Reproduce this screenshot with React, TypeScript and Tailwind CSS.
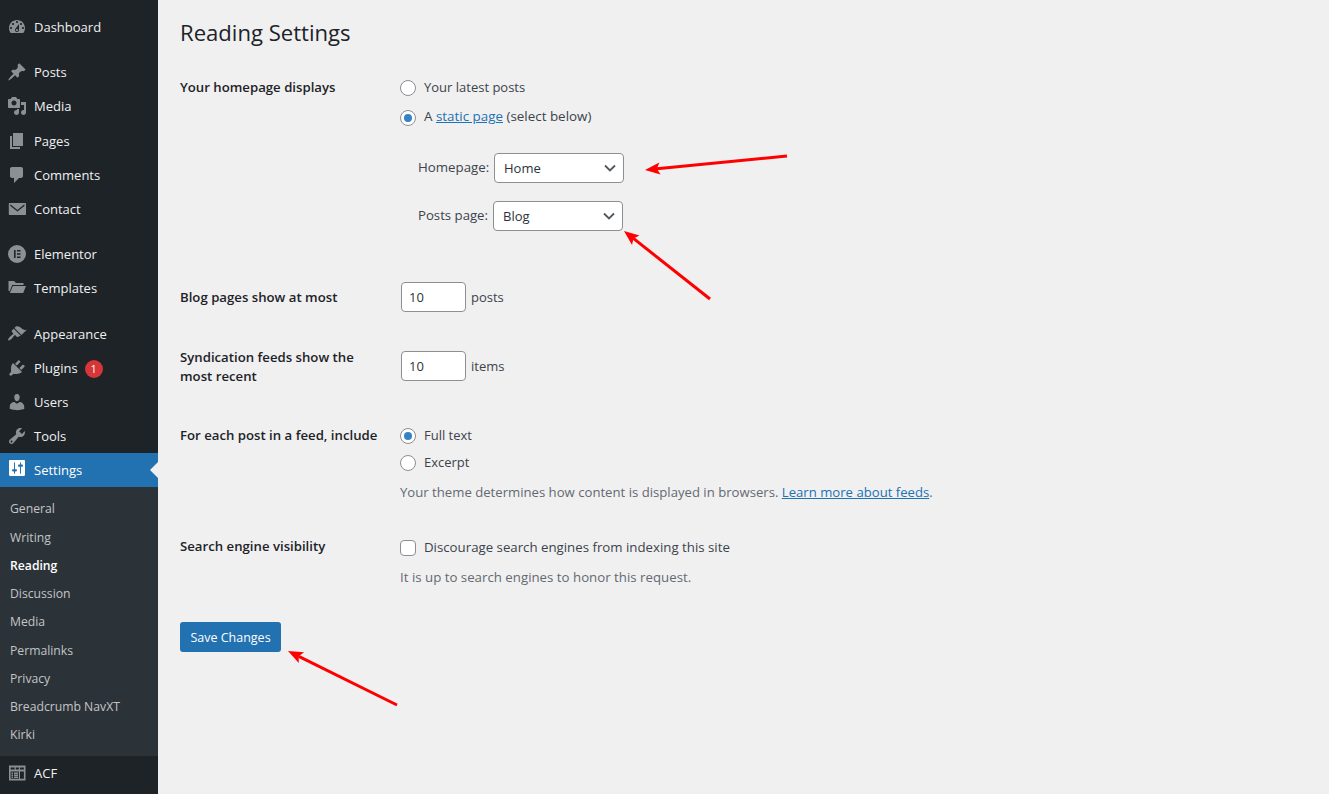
import React from "react";

const P: Record<string, string> = {
  dashboard: "M3.76 16h12.48c1.1-1.37 1.76-3.11 1.76-5 0-4.42-3.58-8-8-8s-8 3.58-8 8c0 1.89.66 3.63 1.76 5zM10 4c.55 0 1 .45 1 1s-.45 1-1 1-1-.45-1-1 .45-1 1-1zM6 6c.55 0 1 .45 1 1s-.45 1-1 1-1-.45-1-1 .45-1 1-1zm8 0c.55 0 1 .45 1 1s-.45 1-1 1-1-.45-1-1 .45-1 1-1zm-5.37 5.55L12 7v6c0 1.1-.9 2-2 2s-2-.9-2-2c0-.57.24-1.08.63-1.45zM4 10c.55 0 1 .45 1 1s-.45 1-1 1-1-.45-1-1 .45-1 1-1zm12 0c.55 0 1 .45 1 1s-.45 1-1 1-1-.45-1-1 .45-1 1-1zm-5 3c0-.55-.45-1-1-1s-1 .45-1 1 .45 1 1 1 1-.45 1-1z",
  post: "M10.44 3.02l1.82-1.82 6.36 6.35-1.83 1.82c-1.05-.68-2.48-.57-3.41.36l-.75.75c-.92.93-1.04 2.35-.35 3.41l-1.83 1.82-2.41-2.41-2.8 2.79c-.42.42-3.38 2.71-3.8 2.29s1.86-3.39 2.28-3.81l2.79-2.79L4.1 9.36l1.83-1.82c1.05.69 2.48.57 3.4-.36l.75-.75c.93-.92 1.05-2.35.36-3.41z",
  media: "M13 11V4c0-.55-.45-1-1-1h-1.67L9 1H5L3.67 3H2c-.55 0-1 .45-1 1v7c0 .55.45 1 1 1h10c.55 0 1-.45 1-1zM7 4.5c1.38 0 2.5 1.12 2.5 2.5S8.38 9.5 7 9.5 4.5 8.38 4.5 7 5.62 4.5 7 4.5zM14 6h5v10.5c0 1.38-1.12 2.5-2.5 2.5S14 17.88 14 16.5s1.12-2.5 2.5-2.5c.17 0 .34.02.5.05V9h-3V6zm-4 8.05V13h2v3.5c0 1.38-1.12 2.5-2.5 2.5S7 17.88 7 16.5 8.12 14 9.5 14c.17 0 .34.02.5.05z",
  page: "M6 15V2h10v13H6zm-1 1h8v2H3V5h2v11z",
  comments: "M5 2h9c1.1 0 2 .9 2 2v7c0 1.1-.9 2-2 2h-2l-5 5v-5H5c-1.1 0-2-.9-2-2V4c0-1.1.9-2 2-2z",
  email: "M2.5 4h15.8a.7.7 0 0 1 .7.7v10.6a.7.7 0 0 1-.7.7H2.5a.7.7 0 0 1-.7-.7V4.7a.7.7 0 0 1 .7-.7zM3.4 5.2v1.7L10.4 12.6l7-5.7V5.2l-7 5.7z",
  elementor: "M10 1a9 9 0 1 0 0 18 9 9 0 0 0 0-18zM7 6h1.6v8H7zM10 6h3.5v1.6H10zM10 9.2h3.5v1.6H10zM10 12.4h3.5V14H10z",
  folder: "M1.5 3h5.5l2 2h7.5v2H5.2L2.6 13.6 1.5 12.5zM5.8 8H19l-2.8 7H2.9z",
  appearance: "M14.48 11.06L7.41 3.99l1.5-1.5c.5-.56 2.3-.47 3.51.32 1.21.8 1.43 1.28 2.91 2.1 1.18.64 2.45 1.26 4.45.85zm-.71.71L6.7 4.7 4.93 6.47c-.39.39-.39 1.02 0 1.41l1.06 1.06c.39.39.39 1.03 0 1.42-.6.6-1.43 1.11-2.21 1.69-.35.26-.7.53-1.01.84-.82.82-2.19 2.77-1.51 3.46s2.64-.69 3.46-1.51c.31-.31.58-.66.84-1.01.58-.78 1.09-1.61 1.69-2.21.39-.39 1.03-.39 1.42 0l1.06 1.06c.39.39 1.02.39 1.41 0z",
  plugins: "M13.11 4.36L9.87 7.6 8 5.73l3.24-3.24c.35-.34 1.05-.2 1.56.32.52.51.66 1.21.31 1.55zm-8 1.77l.91-1.12 9.01 9.01-1.19.84c-.71.71-2.63 1.16-3.82 1.16H6.14L4.9 17.26c-.59.59-1.54.59-2.12 0-.59-.58-.59-1.53 0-2.12l1.24-1.24v-3.88c0-1.13.4-3.19 1.09-3.89zm7.26 3.97l3.24-3.24c.34-.35 1.04-.21 1.55.31.52.51.66 1.21.31 1.55l-3.24 3.25z",
  users: "M10 9.25c-2.27 0-2.73-3.44-2.73-3.44C7 4.02 7.82 2 9.97 2c2.16 0 2.98 2.02 2.71 3.81 0 0-.41 3.44-2.68 3.44zm0 2.57L12.72 10c2.39 0 4.52 2.33 4.52 4.53v2.49s-3.65 1.13-7.24 1.13c-3.65 0-7.24-1.13-7.24-1.13v-2.49c0-2.25 1.94-4.48 4.47-4.48z",
  tools: "M16.68 9.77c-1.34 1.34-3.3 1.67-4.95.99l-5.41 6.52c-.99.99-2.59.99-3.58 0s-.99-2.59 0-3.57l6.52-5.42c-.68-1.65-.35-3.61.99-4.95 1.28-1.28 3.12-1.62 4.72-1.06l-2.89 2.89 2.82 2.82 2.86-2.87c.53 1.58.18 3.39-1.08 4.65zM3.81 16.21c.4.39 1.04.39 1.43 0 .4-.4.4-1.04 0-1.43-.39-.4-1.03-.4-1.43 0-.39.39-.39 1.03 0 1.43z",
  settings: "M18 16V4c0-.55-.45-1-1-1H3c-.55 0-1 .45-1 1v12c0 .55.45 1 1 1h14c.55 0 1-.45 1-1zM8 11h1c.55 0 1 .45 1 1s-.45 1-1 1H8v1.5c0 .28-.22.5-.5.5s-.5-.22-.5-.5V13H6c-.55 0-1-.45-1-1s.45-1 1-1h1V5.5c0-.28.22-.5.5-.5s.5.22.5.5V11zm5-2h-1c-.55 0-1-.45-1-1s.45-1 1-1h1V5.5c0-.28.22-.5.5-.5s.5.22.5.5V7h1c.55 0 1 .45 1 1s-.45 1-1 1h-1v5.5c0 .28-.22.5-.5.5s-.5-.22-.5-.5V9z",
  acf: "M2 2.5h16.500v15H2zM3.600 4.500v2h4v-2zM8.800 4.500v2h3v-2zM12.900 4.500v2h4v-2zM3.600 8.500v7.200h8.300V8.500zM4.500 9.500h1.500v1.500H4.500zM7 9.500h4v1.500H7zM4.500 11.500h1.500V13H4.500zM7 11.500h4V13H7zM4.500 13.500h1.500V15H4.500zM7 13.500h4V15H7zM13 8.500v7.200h3.900V8.500z",
};

function Icon({ name, white }: { name: string; white?: boolean }) {
  return (
    <svg viewBox="0 0 20 20" className={white ? "w-5 h-5 fill-white" : "w-5 h-5 fill-[#8c8f94]"}>
      <path d={P[name]} fillRule="evenodd" transform={name === "settings" ? "translate(0 -3.4) scale(1 1.14)" : undefined} />
    </svg>
  );
}

function Item({ icon, label, badge, active, className = "" }: { icon: string; label: string; badge?: string; active?: boolean; className?: string }) {
  return (
    <div className={`relative flex items-center h-[34px] pl-[7px] text-[13px] ${active ? "bg-[#2271b1] text-white" : "text-[#f0f0f1]"} ${className}`}>
      <Icon name={icon} white={active} />
      <span className="ml-[7px] pt-[2px]">{label}</span>
      {badge && (
        <span className="ml-[7px] mt-[2px] w-[18px] h-[18px] rounded-full bg-[#d63638] text-white text-[11px] flex items-center justify-center">{badge}</span>
      )}
      {active && <span className="absolute right-0 top-[9px] w-0 h-0 border-y-[8px] border-y-transparent border-r-[8px] border-r-[#f0f0f1]" />}
    </div>
  );
}

function Sub({ label, current }: { label: string; current?: boolean }) {
  return (
    <div className={`h-[28.25px] flex items-center pl-[10px] text-[12.2px] ${current ? "text-white font-semibold" : "text-[#c3c4c7]"}`}>{label}</div>
  );
}

function Radio({ checked }: { checked?: boolean }) {
  return (
    <span className="w-4 h-4 rounded-full border border-[#8c8f94] bg-white flex items-center justify-center shrink-0">
      {checked && <span className="w-2 h-2 rounded-full bg-[#3582c4]" />}
    </span>
  );
}

function Select({ value }: { value: string }) {
  return (
    <div className="w-[130px] h-[30px] rounded-[4px] border border-[#8c8f94] bg-white flex items-center justify-between pl-[9px] pr-[5px] text-[#2c3338]">
      <span className="pt-px">{value}</span>
      <svg viewBox="0 0 16 16" className="w-4 h-4 stroke-[#50575e] fill-none">
        <path d="M3 5.5 8 10.5 13 5.5" strokeWidth="1.8" />
      </svg>
    </div>
  );
}

function NumberBox() {
  return (
    <div className="w-[65px] h-[30px] rounded-[4px] border border-[#8c8f94] bg-white flex items-center pl-[7px] pt-px text-[#2c3338]">10</div>
  );
}

function Row({ label, children, className = "" }: { label: React.ReactNode; children: React.ReactNode; className?: string }) {
  return (
    <div className={`grid grid-cols-[220px_1fr] ${className}`}>
      <div className="font-semibold text-[13.2px] text-[#1d2327] leading-[19px]">{label}</div>
      <div>{children}</div>
    </div>
  );
}

function Arrow({ x1, y1, x2, y2 }: { x1: number; y1: number; x2: number; y2: number }) {
  const a = Math.atan2(y2 - y1, x2 - x1);
  const len = 15, w = 6;
  const bx = x2 - Math.cos(a) * len, by = y2 - Math.sin(a) * len;
  const nx = -Math.sin(a) * w, ny = Math.cos(a) * w;
  const mx = x2 - Math.cos(a) * (len - 3), my = y2 - Math.sin(a) * (len - 3);
  return (
    <g>
      <line x1={x1} y1={y1} x2={mx} y2={my} stroke="#ff0000" strokeWidth="3" />
      <polygon points={`${x2},${y2} ${bx + nx},${by + ny} ${mx},${my} ${bx - nx},${by - ny}`} fill="#ff0000" />
    </g>
  );
}

export default function App() {
  return (
    <div className="relative flex h-[794px] w-[1329px] overflow-hidden bg-[#f0f0f1] font-['Open_Sans','Noto_Sans',sans-serif] text-[13px] text-[#3c434a]">
      <aside className="w-[158px] shrink-0 bg-[#1d2327] pt-[10px]">
        <Item icon="dashboard" label="Dashboard" />
        <Item icon="post" label="Posts" className="mt-[11px]" />
        <Item icon="media" label="Media" />
        <Item icon="page" label="Pages" className="mt-px" />
        <Item icon="comments" label="Comments" />
        <Item icon="email" label="Contact" />
        <Item icon="elementor" label="Elementor" className="mt-[11px]" />
        <Item icon="folder" label="Templates" />
        <Item icon="appearance" label="Appearance" className="mt-[12px]" />
        <Item icon="plugins" label="Plugins" badge="1" />
        <Item icon="users" label="Users" />
        <Item icon="tools" label="Tools" />
        <Item icon="settings" label="Settings" active />
        <div className="bg-[#2c3338] pt-[8.35px] h-[269px]">
          <Sub label="General" />
          <Sub label="Writing" />
          <Sub label="Reading" current />
          <Sub label="Discussion" />
          <Sub label="Media" />
          <Sub label="Permalinks" />
          <Sub label="Privacy" />
          <Sub label="Breadcrumb NavXT" />
          <Sub label="Kirki" />
        </div>
        <Item icon="acf" label="ACF" />
      </aside>

      <main className="flex-1 pl-[22px] pt-[17px]">
        <h1 className="text-[22.1px] leading-[30px] text-[#1d2327]">Reading Settings</h1>

        <Row label="Your homepage displays" className="mt-[31px]">
          <label className="flex items-center gap-2 h-[19px]"><Radio /><span>Your latest posts</span></label>
          <label className="flex items-center gap-2 h-[19px] mt-[11px]">
            <Radio checked />
            <span className="text-[13.4px] pb-[2px]">A <a className="text-[#2271b1] underline">static page</a> (select below)</span>
          </label>
          <div className="flex items-center mt-[26px] ml-[18px]"><span className="w-[76px] text-[13.3px]">Homepage:</span><Select value="Home" /></div>
          <div className="flex items-center mt-[18px] ml-[18px]"><span className="w-[75px] text-[13.2px]">Posts page:</span><Select value="Blog" /></div>
        </Row>

        <Row label="Blog pages show at most" className="mt-[51px] items-center">
          <div className="flex items-center gap-[5px] ml-px"><NumberBox /><span className="pt-px">posts</span></div>
        </Row>

        <Row label={<>Syndication feeds show the<br />most recent</>} className="mt-[36px]">
          <div className="flex items-center gap-[5px] ml-px mt-[3px]"><NumberBox /><span className="pt-px">items</span></div>
        </Row>

        <Row label="For each post in a feed, include" className="mt-[40px]">
          <label className="flex items-center gap-2 h-[19px]"><Radio checked /><span>Full text</span></label>
          <label className="flex items-center gap-2 h-[19px] mt-2"><Radio /><span>Excerpt</span></label>
          <p className="mt-[11px] leading-[19px] text-[13.15px] text-[#646970]">
            Your theme determines how content is displayed in browsers. <a className="text-[#2271b1] underline">Learn more about feeds</a>.
          </p>
        </Row>

        <Row label="Search engine visibility" className="mt-[35px]">
          <label className="flex items-center gap-2 h-[19px] mt-px">
            <span className="w-4 h-4 rounded-[4px] border border-[#8c8f94] bg-white shrink-0" />
            <span className="text-[13.26px]">Discourage search engines from indexing this site</span>
          </label>
          <p className="mt-[11px] leading-[19px] text-[13.27px] text-[#646970]">It is up to search engines to honor this request.</p>
        </Row>

        <button className="mt-[35px] w-[101px] h-[30px] pt-[2px] rounded-[3px] bg-[#2271b1] text-white text-[12.5px]">Save Changes</button>
      </main>

      <svg className="absolute inset-0 pointer-events-none" width="1329" height="794">
        <Arrow x1={787} y1={156} x2={645} y2={170} />
        <Arrow x1={710} y1={299} x2={624} y2={231} />
        <Arrow x1={397} y1={705} x2={288} y2={651} />
      </svg>
    </div>
  );
}
